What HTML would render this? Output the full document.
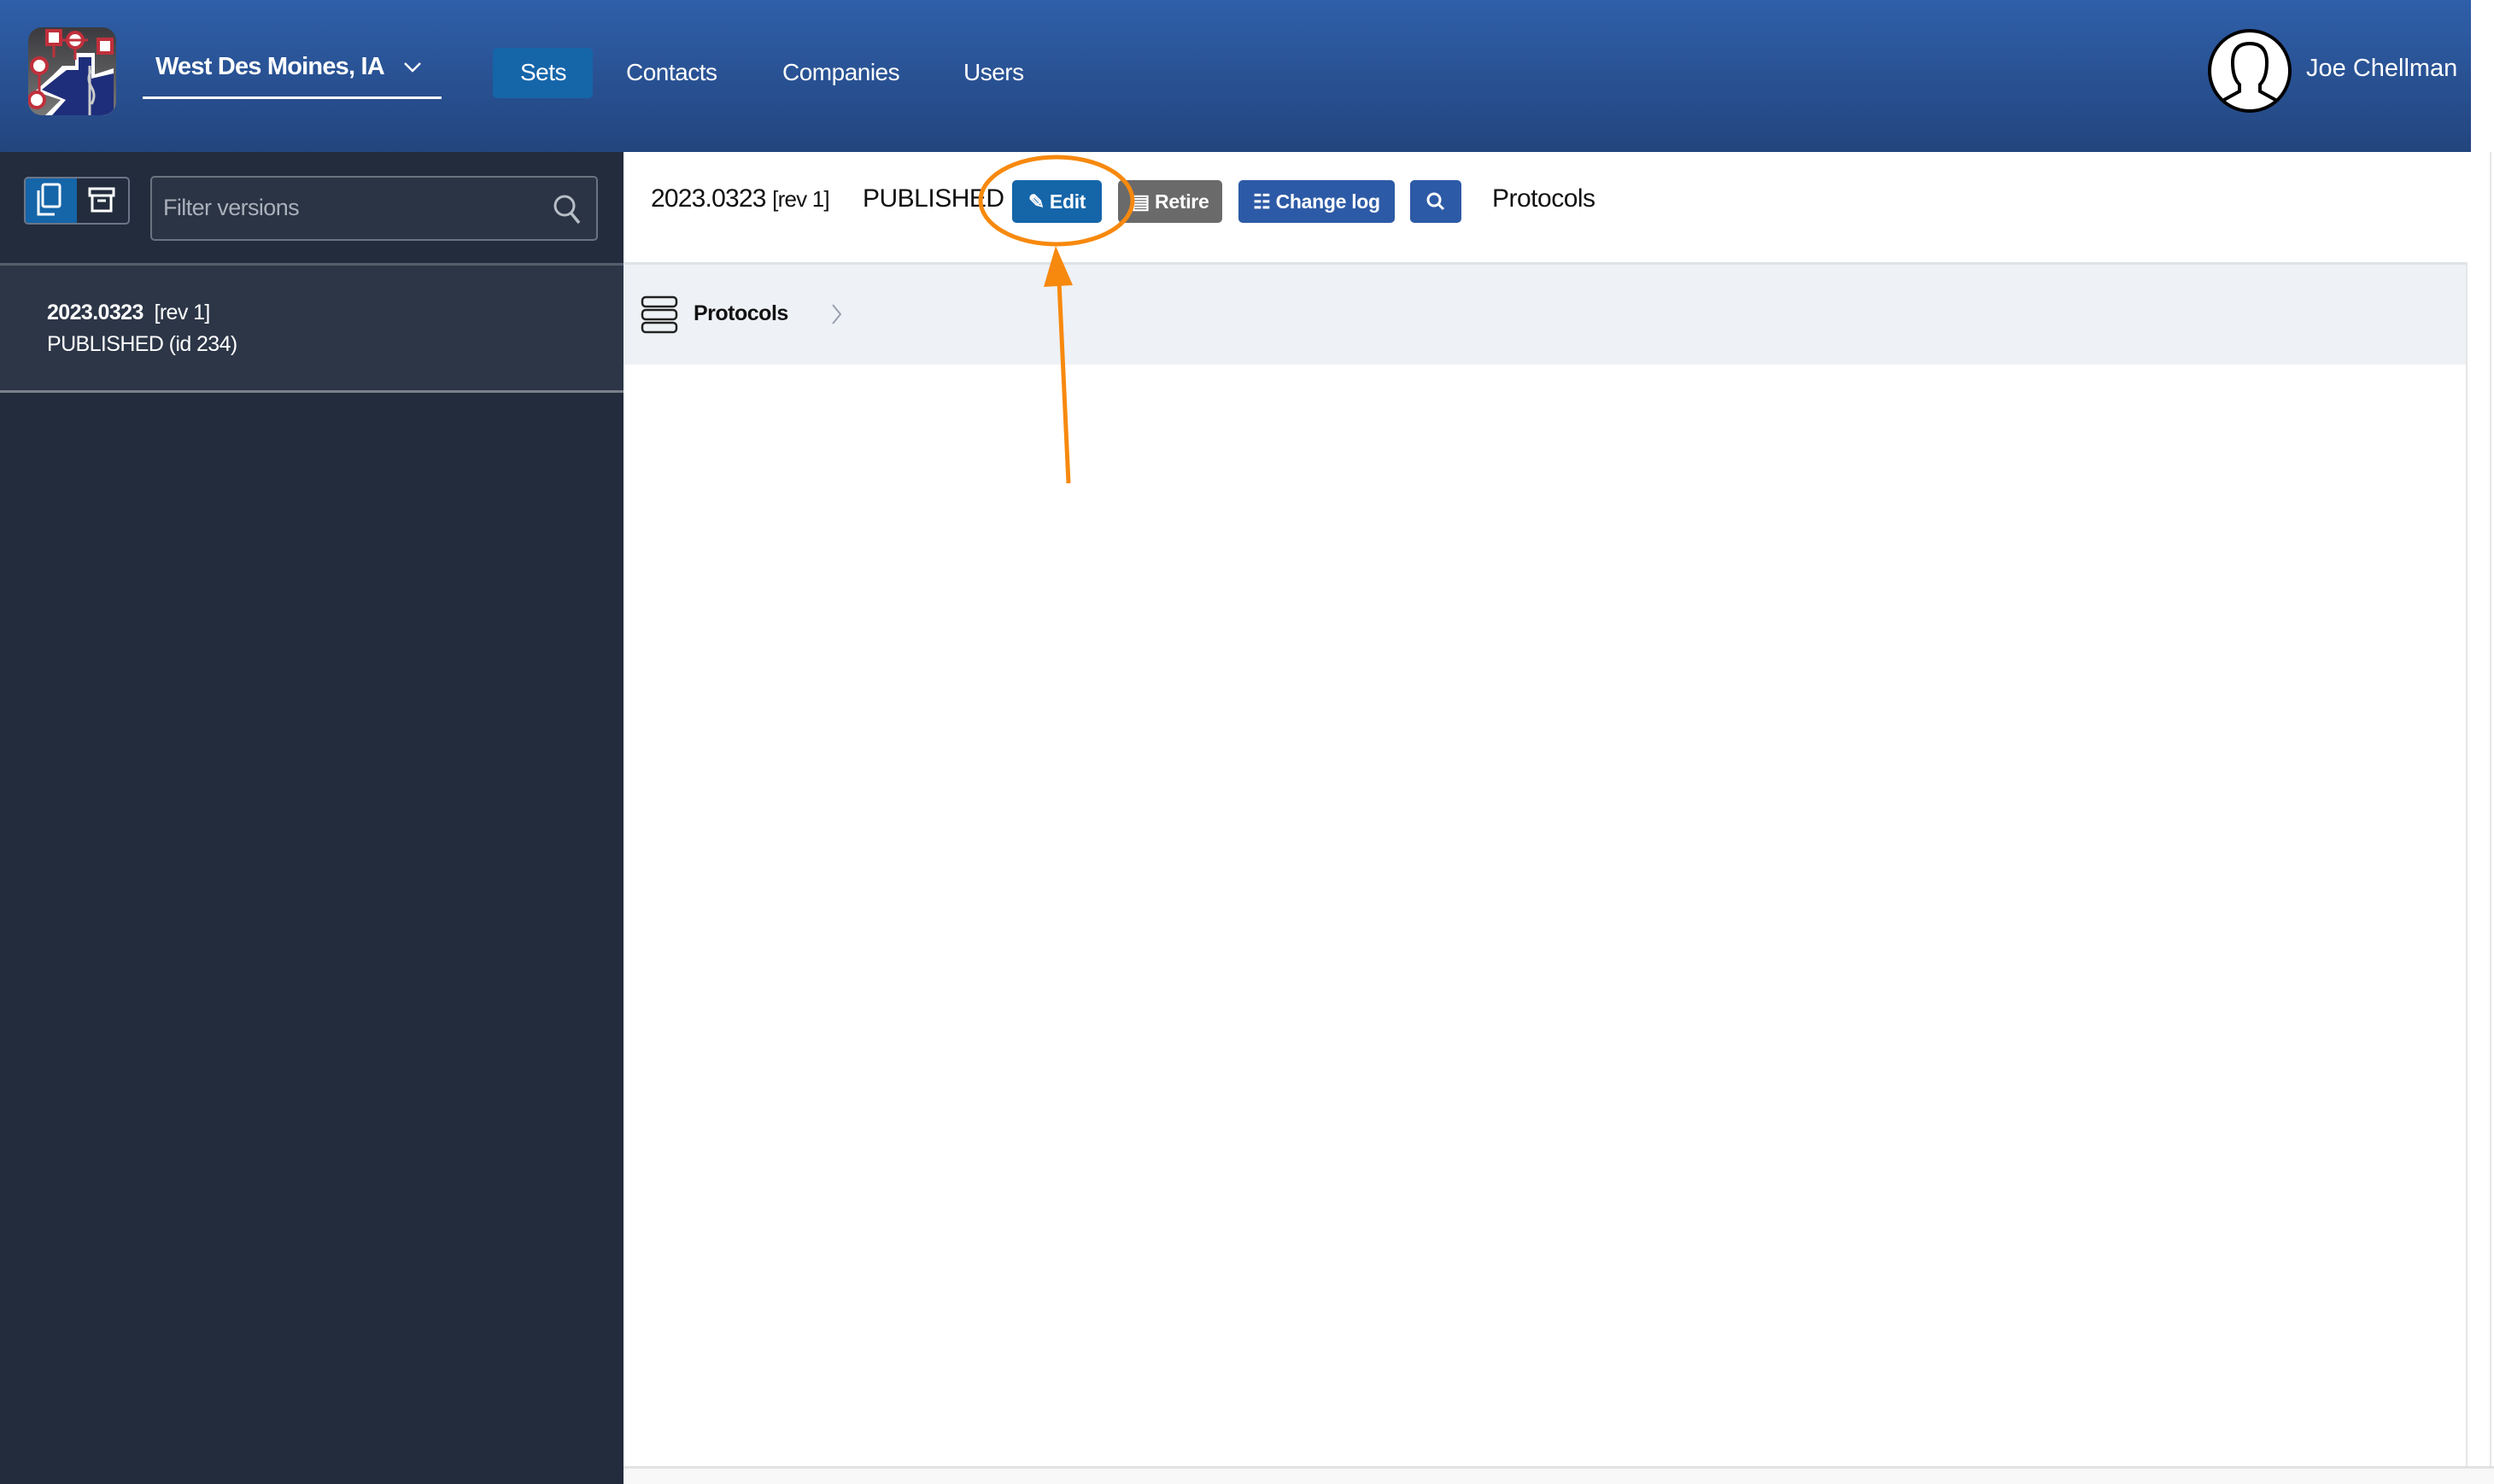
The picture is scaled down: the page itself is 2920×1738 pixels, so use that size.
<!DOCTYPE html>
<html><head><meta charset="utf-8"><style>
*{box-sizing:border-box;margin:0;padding:0}
body{width:2920px;height:1738px;position:relative;overflow:hidden;background:#fff;font-family:"Liberation Sans",sans-serif}
.abs{position:absolute}
#hdr{left:0;top:0;width:2893px;height:178px;background:linear-gradient(#2f5fa9,#23457e)}
.nav{position:absolute;top:69px;color:#fff;font-size:28px;letter-spacing:-0.5px}
#side{left:0;top:178px;width:730px;height:1560px;background:#232c3c}
.btn{position:absolute;top:211px;height:50px;border-radius:5px;color:#fff;font-size:23px;font-weight:bold;display:flex;align-items:center;justify-content:center;gap:8px;letter-spacing:-0.3px}
</style></head><body>
<div id="hdr" class="abs"></div>
<svg class="abs" style="left:33px;top:32px" width="103" height="103" viewBox="0 0 103 103">
<defs><clipPath id="c"><rect width="103" height="103" rx="16"/></clipPath><linearGradient id="g" x1="0" y1="0" x2="0" y2="1"><stop offset="0" stop-color="#3a3a3e"/><stop offset="1" stop-color="#777"/></linearGradient></defs>
<g clip-path="url(#c)"><rect width="103" height="103" fill="url(#g)"/>
<path d="M55 30 H78 V55 L100 48 V103 H20 L38 85 L8 75 L30 55 L40 45 H55Z" fill="#fff"/>
<path d="M59 35 H74 V60 L100 54 V103 H28 L44 85 L16 73 L36 57 L45 50 H59Z" fill="#1f2e7a"/>
<path d="M74 50 q-6 10 0 20 q6 10 0 20 M72 45 V103" stroke="#ccc" stroke-width="3" fill="none"/>
<rect x="22" y="4" width="16" height="16" fill="#fff" stroke="#c0303c" stroke-width="4"/>
<circle cx="55" cy="15" r="9" fill="#fff" stroke="#c0303c" stroke-width="4"/>
<rect x="82" y="14" width="16" height="16" fill="#fff" stroke="#c0303c" stroke-width="4"/>
<circle cx="13" cy="45" r="9" fill="#fff" stroke="#c0303c" stroke-width="4"/>
<circle cx="10" cy="85" r="9" fill="#fff" stroke="#c0303c" stroke-width="4"/>
<path d="M30 20 V35 M40 15 H70 M55 25 V38 M13 55 V75" stroke="#c0303c" stroke-width="3"/></g></svg>
<div class="abs" style="left:182px;top:62px;color:#fff;font-size:29px;font-weight:bold;letter-spacing:-0.8px">West Des Moines, IA</div>
<svg class="abs" style="left:472px;top:72px" width="22" height="14"><path d="M2 2 L11 11 L20 2" stroke="#fff" stroke-width="2.5" fill="none"/></svg>
<div class="abs" style="left:167px;top:113px;width:350px;height:3px;background:#fff"></div>
<div class="abs" style="left:577px;top:56px;width:117px;height:59px;background:#1565a9;border-radius:5px"></div>
<div class="nav" style="left:609px">Sets</div>
<div class="nav" style="left:733px">Contacts</div>
<div class="nav" style="left:916px">Companies</div>
<div class="nav" style="left:1128px">Users</div>
<svg class="abs" style="left:2584px;top:33px" width="100" height="100" viewBox="0 0 100 100"><circle cx="50" cy="50" r="47" fill="#fff" stroke="#000" stroke-width="4"/><path d="M18 85 L38 74 V66 Q30 58 30 40 Q30 18 50 18 Q70 18 70 40 Q70 58 62 66 V74 L82 85" fill="none" stroke="#000" stroke-width="4"/></svg>
<div class="abs" style="left:2700px;top:64px;color:#fff;font-size:29px">Joe Chellman</div>

<div id="side" class="abs"></div>
<div class="abs" style="left:28px;top:207px;width:124px;height:56px;border:2px solid #6a7689;border-radius:5px;overflow:hidden;display:flex"><div style="width:60px;background:#1565a9"></div></div>
<svg class="abs" style="left:40px;top:213px" width="36" height="44"><rect x="10" y="3" width="20" height="26" rx="2" fill="none" stroke="#fff" stroke-width="3"/><path d="M5 10 V38 H24" fill="none" stroke="#fff" stroke-width="3"/></svg>
<svg class="abs" style="left:102px;top:218px" width="34" height="34"><rect x="3" y="3" width="28" height="8" fill="none" stroke="#fff" stroke-width="3"/><rect x="6" y="11" width="22" height="18" fill="none" stroke="#fff" stroke-width="3"/><path d="M12 17 H22" stroke="#fff" stroke-width="3"/></svg>
<div class="abs" style="left:176px;top:206px;width:524px;height:76px;border:2px solid #6b7380;border-radius:5px;background:#2a3444"></div>
<div class="abs" style="left:191px;top:228px;color:#a9b0ba;font-size:27px;letter-spacing:-0.6px">Filter versions</div>
<svg class="abs" style="left:646px;top:226px" width="36" height="40"><circle cx="15" cy="15" r="11" fill="none" stroke="#b8bec7" stroke-width="3"/><path d="M23 24 L32 35" stroke="#b8bec7" stroke-width="3.5"/></svg>
<div class="abs" style="left:0;top:308px;width:730px;height:152px;background:#2c3647;border-top:3px solid #555d6b;border-bottom:3px solid #7a808a"></div>
<div class="abs" style="left:55px;top:352px;color:#fff;font-size:25px;letter-spacing:-0.6px"><b>2023.0323</b>&nbsp; [rev 1]</div>
<div class="abs" style="left:55px;top:389px;color:#fff;font-size:25px;letter-spacing:-0.6px">PUBLISHED (id 234)</div>

<div class="abs" style="left:762px;top:216px;font-size:30px;color:#111;letter-spacing:-0.8px">2023.0323 <span style="font-size:26px">[rev 1]</span></div>
<div class="abs" style="left:1010px;top:216px;font-size:30px;color:#111;letter-spacing:-0.5px">PUBLISHED</div>
<div class="btn" style="left:1185px;width:105px;background:#1565a9">✎ Edit</div>
<div class="btn" style="left:1309px;width:122px;background:#6a6a6a">▤ Retire</div>
<div class="btn" style="left:1450px;width:183px;background:#2d5aa6">☷ Change log</div>
<div class="btn" style="left:1651px;width:60px;background:#2d5aa6"><svg width="24" height="24"><circle cx="10" cy="10" r="7" fill="none" stroke="#fff" stroke-width="3"/><path d="M15 15 L21 21" stroke="#fff" stroke-width="3"/></svg></div>
<div class="abs" style="left:1747px;top:216px;font-size:30px;color:#111;letter-spacing:-0.5px">Protocols</div>

<div class="abs" style="left:730px;top:307px;width:2158px;height:120px;background:#eef1f5;border-top:3px solid #dfe2e6"></div>
<svg class="abs" style="left:750px;top:346px" width="44" height="46"><rect x="2" y="2" width="40" height="11" rx="4" fill="none" stroke="#222" stroke-width="2.5"/><rect x="2" y="17" width="40" height="11" rx="4" fill="none" stroke="#222" stroke-width="2.5"/><rect x="2" y="32" width="40" height="11" rx="4" fill="none" stroke="#222" stroke-width="2.5"/></svg>
<div class="abs" style="left:812px;top:353px;font-size:25px;font-weight:bold;color:#111;letter-spacing:-0.5px">Protocols</div>
<svg class="abs" style="left:972px;top:354px" width="16" height="28"><path d="M3 3 L12 14 L3 25" stroke="#9aa0b0" stroke-width="2" fill="none"/></svg>
<div class="abs" style="left:2887px;top:307px;width:2px;height:1412px;background:#e6e6e6"></div>
<div class="abs" style="left:2915px;top:178px;width:2px;height:1541px;background:#e6e6e6"></div>
<div class="abs" style="left:730px;top:1717px;width:2190px;height:3px;background:#e2e2e2"></div>
<div class="abs" style="left:730px;top:1720px;width:2190px;height:18px;background:#f8f8f8"></div>

<svg class="abs" style="left:0;top:0" width="2920" height="1738"><ellipse cx="1237" cy="235" rx="89" ry="51" fill="none" stroke="#f7890e" stroke-width="5"/><path d="M1251 566 L1240 330" stroke="#f7890e" stroke-width="5"/><path d="M1236 288 L1222 336 L1256 334Z" fill="#f7890e"/></svg>
</body></html>
